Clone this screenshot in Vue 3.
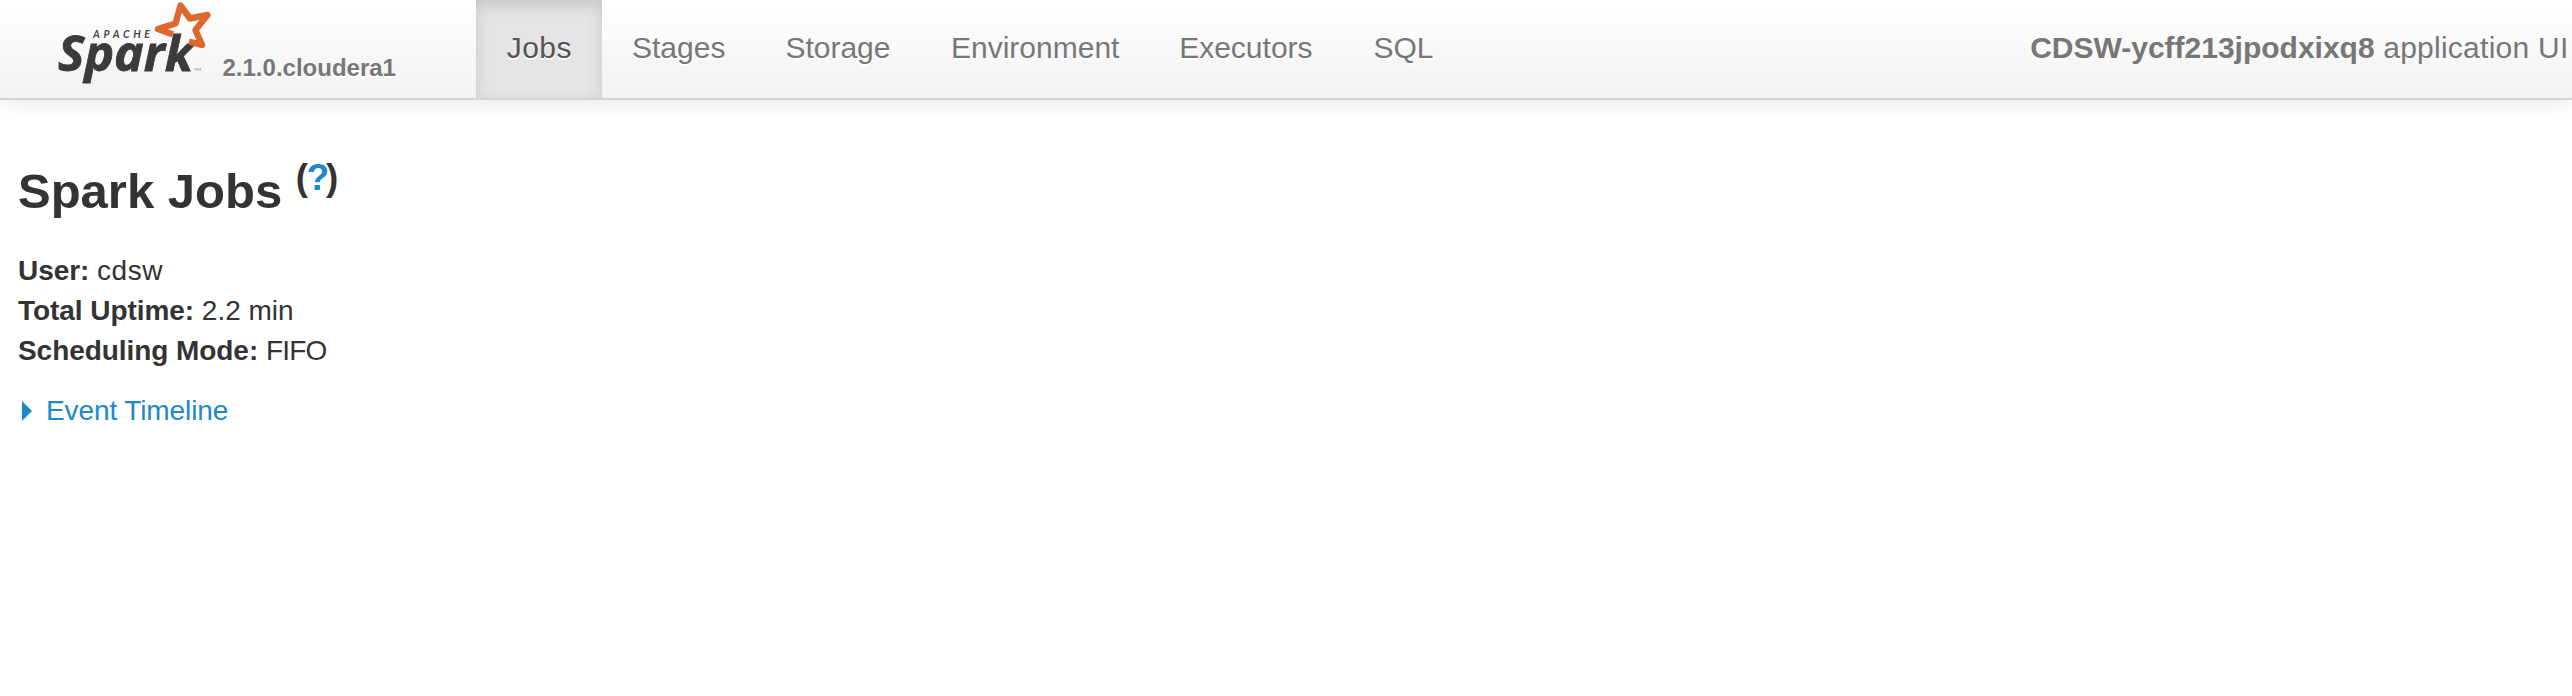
<script setup>
const tabs = [
  { label: 'Jobs', width: 126, active: true },
  { label: 'Stages', width: 153.4 },
  { label: 'Storage', width: 165.6 },
  { label: 'Environment', width: 228.2 },
  { label: 'Executors', width: 194.3 },
  { label: 'SQL', width: 121 },
]
const summary = [
  { name: 'User:', value: 'cdsw', spacing: 0.5 },
  { name: 'Total Uptime:', value: '2.2 min', spacing: 0 },
  { name: 'Scheduling Mode:', value: 'FIFO', spacing: -0.8 },
]
</script>

<template>
  <div class="page">
    <header class="navbar">
      <a class="brand">
        <svg class="logo" width="160" height="84" viewBox="54 0 160 84">
          <text class="word" x="58" y="70.5" textLength="135" lengthAdjust="spacingAndGlyphs">Spark</text>
          <text class="apache" x="93" y="37.5" textLength="57">APACHE</text>
          <text class="tm" x="194" y="71" textLength="7" lengthAdjust="spacingAndGlyphs">TM</text>
          <path class="star" d="M173 34.5 L158 29 L175.5 23.5 L180.5 5.5 L190 18.5 L207.5 15 L195.5 30 L202 45 L189 41.5" />
        </svg>
        <span class="version">2.1.0.cloudera1</span>
      </a>
      <nav class="tabs">
        <a v-for="t in tabs" :key="t.label" class="tab" :class="{ active: t.active }" :style="{ width: t.width + 'px' }">{{ t.label }}</a>
      </nav>
      <p class="app-name"><strong>CDSW-ycff213jpodxixq8</strong> application UI</p>
    </header>
    <main class="content">
      <h3>Spark Jobs <sup>(<a>?</a>)</sup></h3>
      <ul>
        <li v-for="s in summary" :key="s.name"><strong>{{ s.name }}</strong> <span :style="{ letterSpacing: s.spacing + 'px' }">{{ s.value }}</span></li>
      </ul>
      <a class="timeline"><span class="arrow"></span>Event Timeline</a>
    </main>
  </div>
</template>

<style>
body { background: #fff; overflow: hidden; }
</style>
<style scoped>
.page { height: 696px; font: 28px/40px "Liberation Sans", Arial, sans-serif; color: #333; }
.navbar {
  box-sizing: border-box; height: 100px; display: flex; align-items: flex-start;
  background: linear-gradient(#fff, #f2f2f2); border-bottom: 2px solid #d4d4d4;
  box-shadow: 0 2px 20px rgba(0, 0, 0, .1); color: #777; text-shadow: 0 2px 0 #fff;
}
.brand { width: 422px; padding-left: 54px; display: flex; flex: none; }
.logo { display: block; flex: none; text-shadow: none; }
.version { margin: 48px 0 0 8.5px; font-size: 24px; font-weight: bold; }
.word { font: italic 700 49px "Open Sans", "Noto Sans", sans-serif; fill: #3c3a3b; stroke: #3c3a3b; stroke-width: .8; }
.apache { font: italic bold 10.5px Lato, sans-serif; fill: #4b494a; }
.tm { font: 4px Lato, sans-serif; fill: #777; }
.star { fill: none; stroke: #dc672f; stroke-width: 6.4; stroke-linejoin: round; }
.tabs { display: flex; flex: none; font-size: 30px; }
.tab { box-sizing: border-box; height: 98px; padding: 28px 0 0 30px; white-space: nowrap; }
.tab.active { background: #e5e5e5; color: #555; letter-spacing: .5px; padding-left: 30.7px; box-shadow: inset 0 6px 16px rgba(0, 0, 0, .125); }
.app-name { margin: 28px 3.5px 0 auto; font-size: 30px; white-space: nowrap; text-shadow: none; letter-spacing: .25px; }
.app-name strong { letter-spacing: 0; }
.content { padding: 51px 18px 0; }
h3 { margin: 0; font-size: 49px; line-height: 80px; }
sup { position: relative; top: -.5em; font-size: 75%; line-height: 0; vertical-align: baseline; letter-spacing: -1.2px; }
sup a { letter-spacing: -3.2px; }
a { color: inherit; }
sup a, .timeline { color: #1a8acb; }
ul { margin: 20px 0 20px; padding: 0; list-style: none; }
li strong { letter-spacing: -.06px; }
.timeline { display: flex; align-items: center; letter-spacing: -.1px; }
.arrow { width: 0; height: 0; margin: 0 14px 0 4px; border: solid transparent; border-width: 10px 0 10px 10px; border-left-color: #1a8acb; }
</style>
